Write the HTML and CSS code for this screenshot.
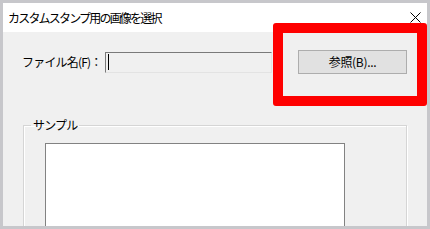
FILE: index.html
```html
<!DOCTYPE html>
<html lang="ja">
<head>
<meta charset="utf-8">
<link rel="stylesheet" href="styles.css">
</head>
<body>
<div class="window">
  <div class="titlebar">
    <span class="title">カスタムスタンプ用の画像を選択</span>
    <svg class="close" width="11" height="11" viewBox="0 0 11 11"><path d="M0.5 0.5 L10.5 10.5 M10.5 0.5 L0.5 10.5" stroke="#000" stroke-width="1" fill="none"/></svg>
  </div>
  <div class="content">
    <div class="row">
      <label class="label">ファイル名(F)：</label>
      <div class="field"><span class="caret"></span></div>
      <div class="button">参照(B)...</div>
    </div>
    <fieldset class="group">
      <legend class="legend">サンプル</legend>
      <div class="sample"></div>
    </fieldset>
  </div>
  <div class="highlight"></div>
</div>
</body>
</html>
```
FILE: styles.css
```css
html, body {
  margin: 0;
  padding: 0;
}
body {
  width: 430px;
  height: 229px;
  background: #c7c7cb;
  overflow: hidden;
  font-family: "Noto Sans CJK JP", "Noto Sans", sans-serif;
  color: #000;
}
.window {
  position: relative;
  margin: 3px 0 0 3px;
  width: 424px;
  height: 223px;
  background: #f0f0f0;
  overflow: hidden;
}
.titlebar {
  height: 29px;
  background: #fff;
  display: flex;
  align-items: center;
  padding: 0 0 0 5px;
}
.title {
  font-size: 12px;
  letter-spacing: -1.8px;
  line-height: 14px;
  flex: 1;
}
.close {
  margin-right: 6px;
  margin-top: 0;
}
.content {
  display: flex;
  flex-direction: column;
}
.row {
  display: flex;
  align-items: center;
  height: 24px;
  margin-top: 18px;
  padding-left: 19px;
}
.label {
  width: 83px;
  font-size: 12px;
  letter-spacing: -0.8px;
  line-height: 14px;
}
.field {
  width: 163px;
  height: 19px;
  border: 1px solid;
  border-color: #7a7a7a #e3e3e3 #e3e3e3 #7a7a7a;
  background: #f0f0f0;
  display: flex;
  align-items: center;
  padding-left: 2px;
  box-sizing: content-box;
}
.caret {
  width: 1px;
  height: 16px;
  background: #000;
}
.button {
  margin-left: 26px;
  width: 107px;
  height: 22px;
  border: 1px solid #adadad;
  background: #e1e1e1;
  font-size: 12px;
  line-height: 22px;
  text-align: center;
  letter-spacing: -0.3px;
}
.group {
  margin: 44px 0 0 20px;
  padding: 0;
  width: 382px;
  min-width: 0;
  height: 120px;
  border: 1px solid #d5d5d5;
  box-shadow: inset 1px 1px 0 #fff, 1px 1px 0 #fff;
}
.legend {
  margin-left: 7px;
  padding: 0 2px;
  font-size: 12px;
  line-height: 14px;
  letter-spacing: -0.8px;
}
.sample {
  margin: 11px 0 0 21px;
  width: 298px;
  height: 120px;
  background: #fff;
  border: 1px solid #828282;
}
.highlight {
  position: absolute;
  left: 270px;
  top: 20px;
  width: 154px;
  height: 83px;
  box-sizing: border-box;
  border: 10px solid #fe0000;
  border-radius: 3px;
}
```
